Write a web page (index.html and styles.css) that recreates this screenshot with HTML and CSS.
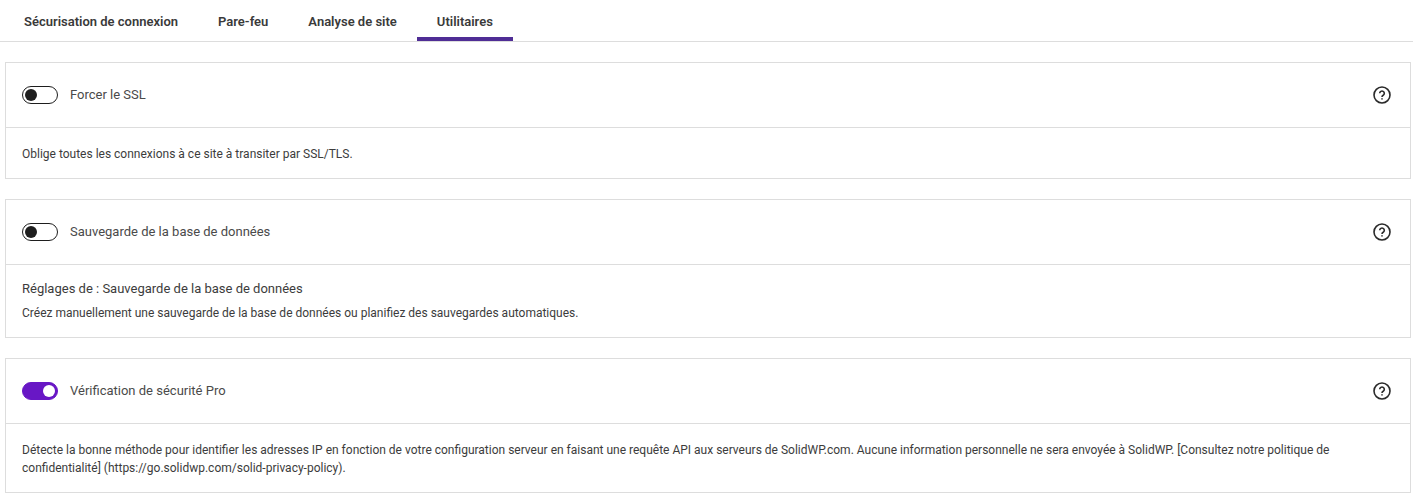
FILE: index.html
```html
<!DOCTYPE html>
<html lang="fr">
<head>
  <meta charset="UTF-8">
  <meta name="viewport" content="width=device-width, initial-scale=1.0">
  <title>Utilitaires</title>
  <link rel="stylesheet" href="styles.css">
</head>
<body>
<svg class="sprite" aria-hidden="true">
  <symbol id="help" viewBox="0 0 18 18">
    <circle cx="9" cy="9" r="8" />
    <path d="M6.7 7.3a2.3 2.3 0 1 1 3.5 2c-.8.5-1.2.8-1.2 1.7" />
    <path d="M9 12.2v1.4" />
  </symbol>
</svg>

<!-- Tabs -->
<div class="tabs" role="tablist">
  <button type="button" class="tab" role="tab" aria-selected="false">Sécurisation de connexion</button>
  <button type="button" class="tab" role="tab" aria-selected="false">Pare-feu</button>
  <button type="button" class="tab" role="tab" aria-selected="false">Analyse de site</button>
  <button type="button" class="tab" role="tab" aria-selected="true">Utilitaires</button>
</div>

<!-- Modules -->
<main class="modules">
  <section class="card">
    <header class="card-header">
      <input type="checkbox" class="toggle" id="ssl">
      <label for="ssl">Forcer le SSL</label>
      <button type="button" class="help" aria-label="Aide"><svg><use href="#help" /></svg></button>
    </header>
    <div class="card-body">
      <p>Oblige toutes les connexions à ce site à transiter par SSL/TLS.</p>
    </div>
  </section>

  <section class="card">
    <header class="card-header">
      <input type="checkbox" class="toggle" id="backup">
      <label for="backup">Sauvegarde de la base de données</label>
      <button type="button" class="help" aria-label="Aide"><svg><use href="#help" /></svg></button>
    </header>
    <div class="card-body">
      <h2>Réglages de : Sauvegarde de la base de données</h2>
      <p>Créez manuellement une sauvegarde de la base de données ou planifiez des sauvegardes automatiques.</p>
    </div>
  </section>

  <section class="card">
    <header class="card-header">
      <input type="checkbox" class="toggle" id="check" checked>
      <label for="check">Vérification de sécurité Pro</label>
      <button type="button" class="help" aria-label="Aide"><svg><use href="#help" /></svg></button>
    </header>
    <div class="card-body">
      <p>Détecte la bonne méthode pour identifier les adresses IP en fonction de votre configuration serveur en faisant une requête API aux serveurs de SolidWP.com. Aucune information personnelle ne sera envoyée à SolidWP. [Consultez notre politique de confidentialité] (https://go.solidwp.com/solid-privacy-policy).</p>
    </div>
  </section>
</main>
</body>
</html>
```

FILE: styles.css
```css
* {
  box-sizing: border-box;
}
body {
  margin: 0;
  background: #fff;
  color: #3c3c3c;
  font-family: Roboto, "Open Sans", sans-serif;
  font-size: 12px;
  line-height: 18px;
}
.sprite {
  display: none;
}
.tabs {
  display: flex;
  padding-left: 4px;
  border-bottom: 1px solid #ddd;
}
.tab {
  height: 41px;
  padding: 2px 20px 0;
  border: none;
  background: none;
  color: #3a3a3a;
  font-family: inherit;
  font-size: 13px;
  font-weight: 600;
  cursor: pointer;
}
.tab[aria-selected="true"] {
  box-shadow: inset 0 -4px #4f2d95;
}
.modules {
  display: flex;
  flex-direction: column;
  gap: 20px;
  padding: 20px 2px 3px 5px;
}
.card {
  border: 1px solid #ddd;
}
.card-header {
  display: flex;
  align-items: center;
  gap: 12px;
  height: 65px;
  padding: 0 19px 0 16px;
  border-bottom: 1px solid #ddd;
  color: #4a4a4a;
  font-size: 13px;
}
.toggle {
  appearance: none;
  flex: none;
  display: flex;
  align-items: center;
  width: 36px;
  height: 18px;
  margin: 0;
  padding: 0 2px;
  border: 1px solid #1e1e1e;
  border-radius: 9px;
  cursor: pointer;
}
.toggle::before {
  content: "";
  width: 12px;
  height: 12px;
  border-radius: 50%;
  background: #1e1e1e;
}
.toggle:checked {
  justify-content: flex-end;
  border-color: #6817c5;
  background: #6817c5;
}
.toggle:checked::before {
  background: #fff;
}
.help {
  display: flex;
  margin-left: auto;
  padding: 0;
  border: none;
  background: none;
  color: #2a2a2a;
  cursor: pointer;
}
.help svg {
  width: 18px;
  height: 18px;
  fill: none;
  stroke: currentColor;
  stroke-width: 1.6;
}
.card-body {
  padding: 17px 16px 15px;
}
.card-body h2 {
  margin: 0 0 8px;
  font-size: 13px;
  font-weight: 400;
  line-height: 14px;
}
.card-body p {
  margin: 0;
}
```
